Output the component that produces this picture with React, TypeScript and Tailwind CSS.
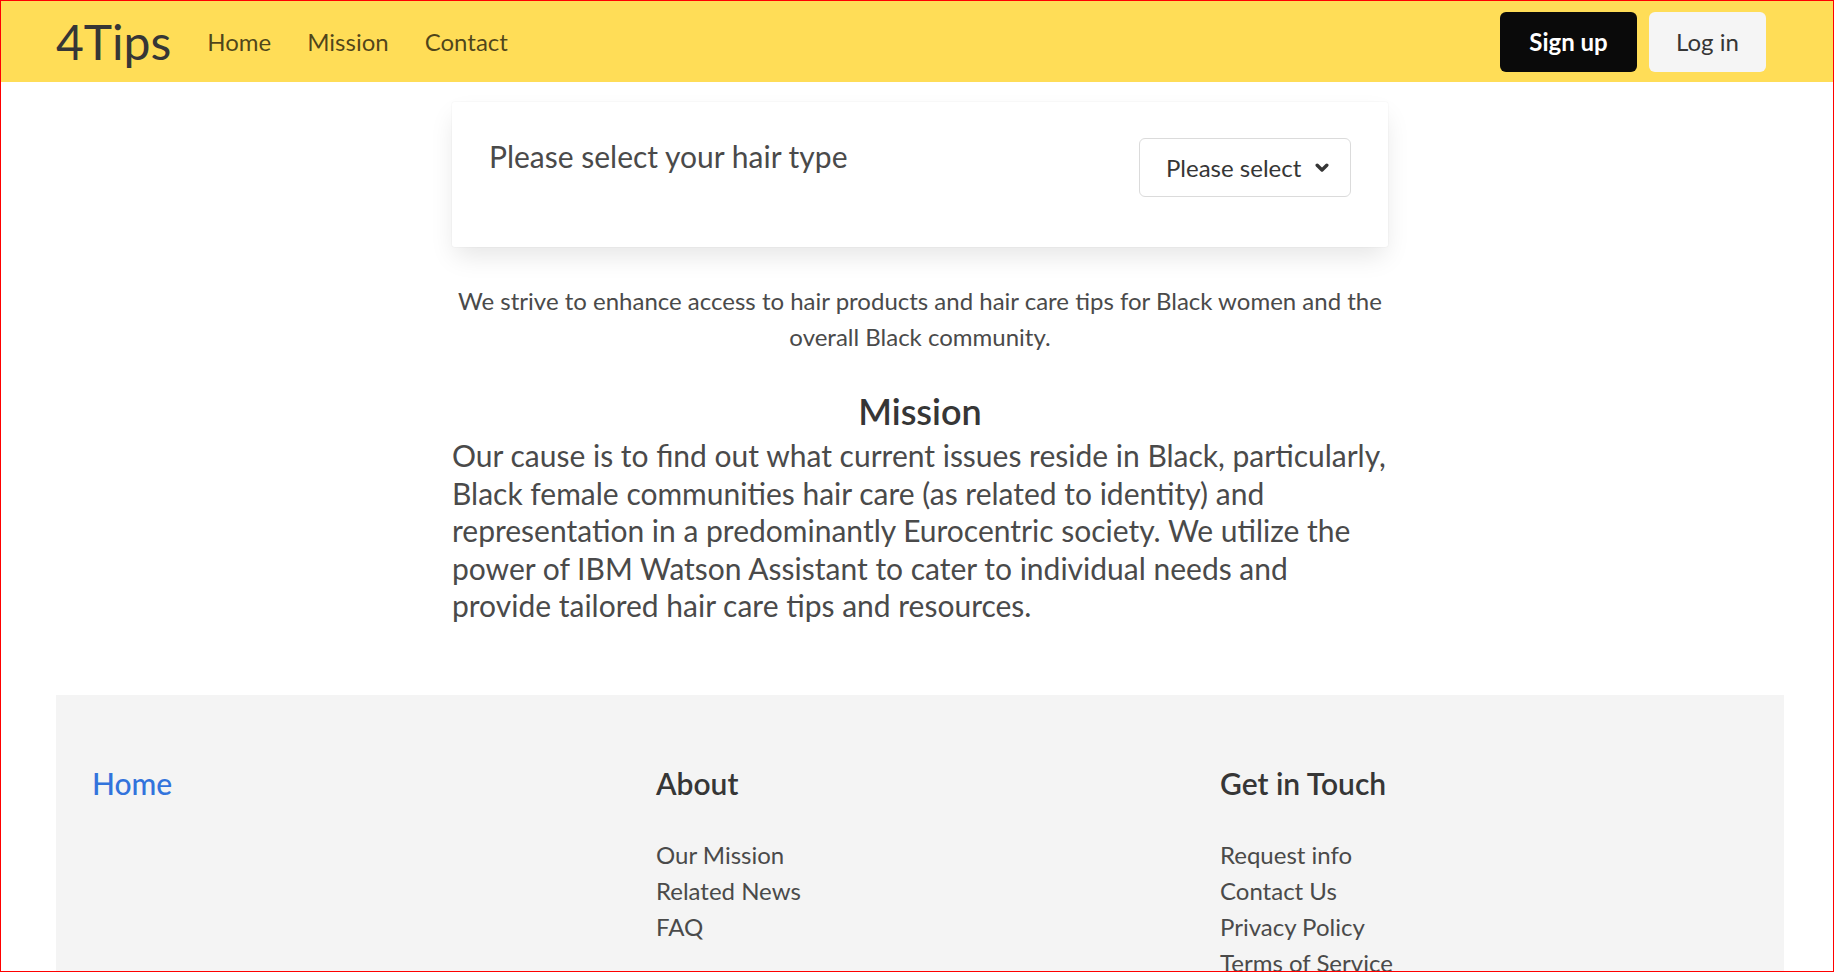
import React from 'react';

const navLinks = ['Home', 'Mission', 'Contact'];

const aboutLinks = ['Our Mission', 'Related News', 'FAQ'];
const touchLinks = ['Request info', 'Contact Us', 'Privacy Policy', 'Terms of Service'];

function Chevron() {
  return (
    <svg width="14" height="10" viewBox="0 0 14 10" fill="none" aria-hidden="true">
      <path d="M2.2 2.2 L7 7 L11.8 2.2" stroke="#363636" strokeWidth="3.4" strokeLinecap="round" strokeLinejoin="round" />
    </svg>
  );
}

function FooterColumn({ title, links, titleClass }: { title: string; links: string[]; titleClass: string }) {
  return (
    <div>
      <div className={`text-[30px] leading-[37.5px] ${titleClass}`}>{title}</div>
      {links.length > 0 ? (
        <ul className="mt-[35px]">
          {links.map((l) => (
            <li key={l} className="text-[24px] leading-[36px] text-[#4a4a4a]">
              {l}
            </li>
          ))}
        </ul>
      ) : null}
    </div>
  );
}

export default function App() {
  return (
    <div className="h-[972px] overflow-hidden border border-[#ff0000] bg-white font-['Lato','Liberation_Sans',sans-serif] text-[#4a4a4a]">
      <header className="flex h-[81px] items-center justify-between bg-[#ffdd57] pl-[55px] pr-[67px]">
        <div className="flex items-center">
          <a className="text-[48px] leading-none text-[#363636]">4Tips</a>
          <nav className="ml-[36px] flex items-center gap-[36px] text-[24px] leading-none text-black/70">
            {navLinks.map((n) => (
              <a key={n}>{n}</a>
            ))}
          </nav>
        </div>
        <div className="flex items-center gap-[12px]">
          <button className="h-[60px] w-[137px] rounded-[6px] bg-[#0a0a0a] text-[24px] font-bold text-white">
            Sign up
          </button>
          <button className="h-[60px] w-[117px] rounded-[6px] bg-[#f5f5f5] text-[24px] text-[#363636]">
            Log in
          </button>
        </div>
      </header>

      <main className="ml-[451px] w-[936px]">
        <div className="mt-[20px] flex items-start justify-between rounded-[3px] bg-white px-[37px] pb-[50px] pt-[36px] shadow-[0_12px_24px_-3px_rgba(10,10,10,0.1),0_0_0_1px_rgba(10,10,10,0.02)]">
          <div className="text-[30px] leading-[37.5px] text-[#4a4a4a]">Please select your hair type</div>
          <div className="flex h-[59px] w-[212px] items-center justify-between rounded-[6px] border border-[#dbdbdb] pl-[26px] pr-[21px] text-[24px] text-[#363636]">
            <span>Please select</span>
            <Chevron />
          </div>
        </div>

        <p className="mt-[36px] text-center text-[24px] leading-[36px] text-[#4a4a4a]">
          We strive to enhance access to hair products and hair care tips for Black women and the
          <br />
          overall Black community.
        </p>

        <h2 className="mt-[34px] text-center text-[36px] font-semibold leading-[45px] text-[#363636]">Mission</h2>
        <p className="mt-[3px] text-[30px] leading-[37.5px] text-[#4a4a4a]">
          Our cause is to find out what current issues reside in Black, particularly,
          <br />
          Black female communities hair care (as related to identity) and
          <br />
          representation in a predominantly Eurocentric society. We utilize the
          <br />
          power of IBM Watson Assistant to cater to individual needs and
          <br />
          provide tailored hair care tips and resources.
        </p>
      </main>

      <footer className="ml-[55px] mr-[49px] mt-[70px] grid grid-cols-[564px_564px_564px] bg-[#f4f4f4] pb-[48px] pl-[36px] pt-[70px]">
        <FooterColumn title="Home" links={[]} titleClass="font-medium text-[#3273dc]" />
        <FooterColumn title="About" links={aboutLinks} titleClass="font-semibold text-[#363636]" />
        <FooterColumn title="Get in Touch" links={touchLinks} titleClass="font-semibold text-[#363636]" />
      </footer>
    </div>
  );
}
